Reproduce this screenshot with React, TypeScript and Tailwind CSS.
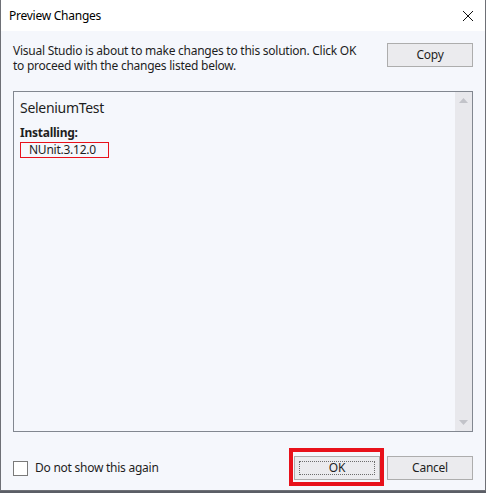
const font = { fontFamily: '"Noto Sans", "Open Sans", sans-serif' };

function Button({ label, focused }: { label: string; focused?: boolean }) {
  return (
    <div className="relative flex h-[24px] w-[86px] items-center justify-center border border-[#adadad] bg-[#ebebee] text-[12px] text-[#1e1e1e]">
      {focused && <div className="absolute inset-[4px] border border-dotted border-[#6d6d6d]" />}
      <span className="relative">{label}</span>
    </div>
  );
}

export default function App() {
  return (
    <div className="h-[493px] w-[486px] bg-[#5b5e66] tracking-[-0.25px]" style={font}>
      <div className="flex h-[491px] flex-col border-x border-b border-[#6e7076] bg-[#f5f7fc]">
        {/* Title bar */}
        <div className="flex h-[31px] shrink-0 items-center justify-between bg-white pl-[8px] pr-[10px]">
          <span className="text-[12px] text-black">Preview Changes</span>
          <svg width="12" height="12" viewBox="0 0 12 12" className="mr-[1px]">
            <path d="M1 1 L11 11 M11 1 L1 11" stroke="#111" strokeWidth="1" />
          </svg>
        </div>

        <div className="flex flex-1 flex-col px-[12px]">
          {/* Message + Copy */}
          <div className="mt-[12px] flex items-start justify-between">
            <div className="text-[12px] leading-[15px] text-[#1e1e1e]">
              <div>Visual Studio is about to make changes to this solution. Click OK</div>
              <div>to proceed with the changes listed below.</div>
            </div>
            <Button label="Copy" />
          </div>

          {/* Changes list */}
          <div className="mt-[18px] flex h-[341px] border border-[#828790] bg-[#f5f7fc]">
            <div className="flex-1 pl-[6px] pt-[6px]">
              <div className="text-[14px] leading-[20px] tracking-[-0.3px] text-[#1e1e1e]">SeleniumTest</div>
              <div className="mt-[7px] text-[12px] font-bold leading-[15px] text-[#1e1e1e]">Installing:</div>
              <div className="mt-[2px] flex h-[16px] w-[89px] items-center border border-[#e8111b] pl-[8px] text-[12px] text-[#1e1e1e]">
                NUnit.3.12.0
              </div>
            </div>
            {/* Scrollbar */}
            <div className="flex w-[17px] flex-col items-center justify-between bg-[#e8e8ec] py-[6px]">
              <svg width="9" height="5" viewBox="0 0 9 5">
                <path d="M0 5 L4.5 0 L9 5 Z" fill="#c2c3c9" />
              </svg>
              <svg width="9" height="5" viewBox="0 0 9 5">
                <path d="M0 0 L4.5 5 L9 0 Z" fill="#c2c3c9" />
              </svg>
            </div>
          </div>

          {/* Bottom row */}
          <div className="mt-[24px] flex items-center justify-between">
            <label className="flex items-center gap-[7px] text-[12px] text-[#1e1e1e]">
              <span className="h-[15px] w-[15px] border border-[#7a7a7a] bg-white" />
              Do not show this again
            </label>
            <div className="flex items-center gap-[7px]">
              <div className="relative">
                <div className="pointer-events-none absolute -left-[5px] -right-[4px] -top-[8px] -bottom-[6px] border-[4px] border-[#e8111b]" />
                <Button label="OK" focused />
              </div>
              <Button label="Cancel" />
            </div>
          </div>
        </div>
      </div>
    </div>
  );
}
